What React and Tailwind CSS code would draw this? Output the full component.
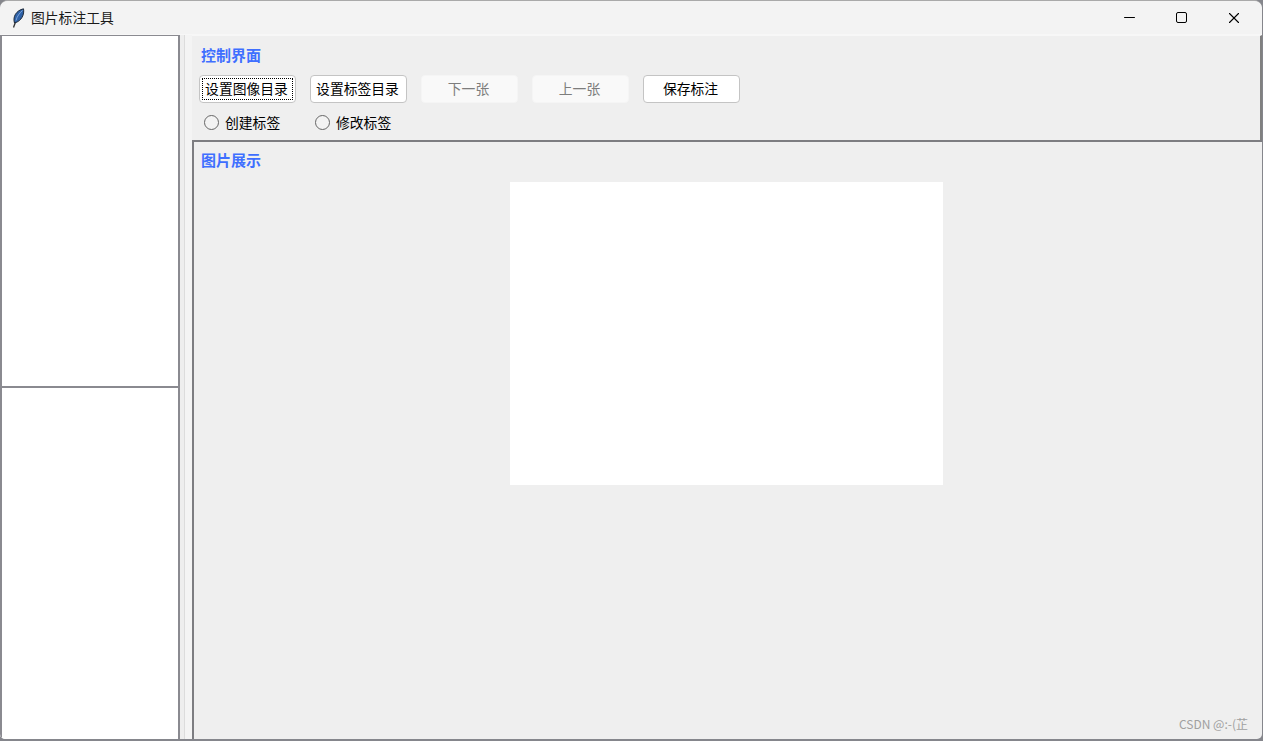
import { Minus, X } from 'lucide-react';

const fontStack = "font-['Microsoft_YaHei','Noto_Sans_CJK_SC','Liberation_Sans',sans-serif]";

const buttons = [
  { label: '设置图像目录', focused: true },
  { label: '设置标签目录' },
  { label: '下一张', disabled: true },
  { label: '上一张', disabled: true },
  { label: '保存标注' },
];

function Feather() {
  return (
    <svg width="13" height="20" viewBox="0 0 13 20" className="shrink-0">
      <path d="M1.5 19.5 L3.5 14" stroke="#333" strokeWidth="1.3" fill="none" />
      <path d="M2.5 15 C0.5 9 4 2.5 11.5 0.8 C12.5 6 10 13 2.5 15 Z" fill="#2f62a8" stroke="#1f2a3a" strokeWidth="1" />
      <path d="M4 12.5 C5 8.5 7.5 5 10.5 2.5" stroke="#8fb4e6" strokeWidth="0.8" fill="none" />
    </svg>
  );
}

function TitleBar() {
  return (
    <div className="flex h-[33px] shrink-0 items-center bg-[#f3f3f3]">
      <div className="ml-[12px] flex items-center gap-[6px]">
        <Feather />
        <span className="text-[13.8px] leading-none text-[#1a1a1a]">图片标注工具</span>
      </div>
      <div className="ml-auto flex items-center text-black">
        <div className="flex w-[52px] justify-center"><Minus size={17} strokeWidth={1.5} /></div>
        <div className="flex w-[52px] justify-center">
          <div className="h-[11px] w-[11px] rounded-[2px] border-[1.3px] border-black" />
        </div>
        <div className="mr-[1px] flex w-[54px] justify-center"><X size={18} strokeWidth={1.5} /></div>
      </div>
    </div>
  );
}

function ActionButton({ label, focused, disabled }) {
  if (disabled) {
    return (
      <button className="flex h-[28px] w-[97px] items-center justify-center rounded-[4px] border border-[#f5f5f5] bg-[#f9f9f9] pr-[2px] pb-[2px] text-[13.8px] text-[#7d7d7d]">
        {label}
      </button>
    );
  }
  if (focused) {
    return (
      <button className="flex h-[28px] w-[97px] items-center justify-center rounded-[4px] border border-[#c4c4c4] bg-white text-[13.8px] text-black">
        <span className="flex h-[22px] w-[91px] items-center justify-center border border-dotted border-black pr-[2px] pb-[2px]">{label}</span>
      </button>
    );
  }
  return (
    <button className="flex h-[28px] w-[97px] items-center justify-center rounded-[4px] border border-[#c4c4c4] bg-white pr-[2px] pb-[2px] text-[13.8px] text-black">
      {label}
    </button>
  );
}

function Radio({ label }) {
  return (
    <label className="flex w-[111px] items-center gap-[6px] text-[13.8px] leading-none text-black">
      <span className="h-[15px] w-[15px] rounded-full border-[1.5px] border-[#666] bg-[#f3f3f3]" />
      {label}
    </label>
  );
}

function SectionTitle({ children }) {
  return <div className="text-[15px] leading-none font-bold text-[#3f6fff]">{children}</div>;
}

export default function App() {
  return (
    <div className={`relative h-[741px] w-[1263px] overflow-hidden bg-[#85868c] ${fontStack}`}>
      <div className="flex h-[739px] w-[1262px] flex-col overflow-hidden rounded-t-[8px] rounded-b-[5px] border-t border-[#a9a9a9] bg-[#efefef]">
        <TitleBar />
        <div className="flex min-h-0 flex-1 border-t border-[#f7f7f7]">
          {/* Left lists */}
          <div className="flex w-[180px] shrink-0 flex-col border-l-2 border-r-2 border-[#8a8a90] bg-white">
            <div className="h-[351px] border-t border-[#8a8a90]" />
            <div className="flex-1 border-t-2 border-[#8a8a90]" />
          </div>

          {/* Sash */}
          <div className="flex w-[12px] shrink-0 bg-[#f4f4f4]">
            <div className="w-[5px] border-r border-[#dcdcdc] bg-[#eeeeee]" />
          </div>

          {/* Right side */}
          <div className="flex min-w-0 flex-1 flex-col">
            <div className="flex h-[105px] shrink-0 flex-col border-t border-r-2 border-t-[#f7f7f7] border-r-[#808080] pt-[11px] pl-[9px]">
              <SectionTitle>控制界面</SectionTitle>
              <div className="mt-[13px] -ml-[2px] flex gap-[14px]">
                {buttons.map((b) => (
                  <ActionButton key={b.label} {...b} />
                ))}
              </div>
              <div className="mt-[12px] ml-[3px] flex">
                <Radio label="创建标签" />
                <Radio label="修改标签" />
              </div>
            </div>
            <div className="flex min-h-0 flex-1 flex-col border-t-2 border-l-2 border-[#7d7d81] pt-[10px] pr-[3px]">
              <div className="pl-[7px]"><SectionTitle>图片展示</SectionTitle></div>
              <div className="mt-[15px] flex justify-center">
                <div className="h-[303px] w-[433px] bg-white" />
              </div>
            </div>
          </div>
        </div>
      </div>
      <span className="absolute right-[15px] bottom-[11px] text-[12px] leading-none text-[#a0a0a0]">CSDN @:-(芷</span>
    </div>
  );
}
